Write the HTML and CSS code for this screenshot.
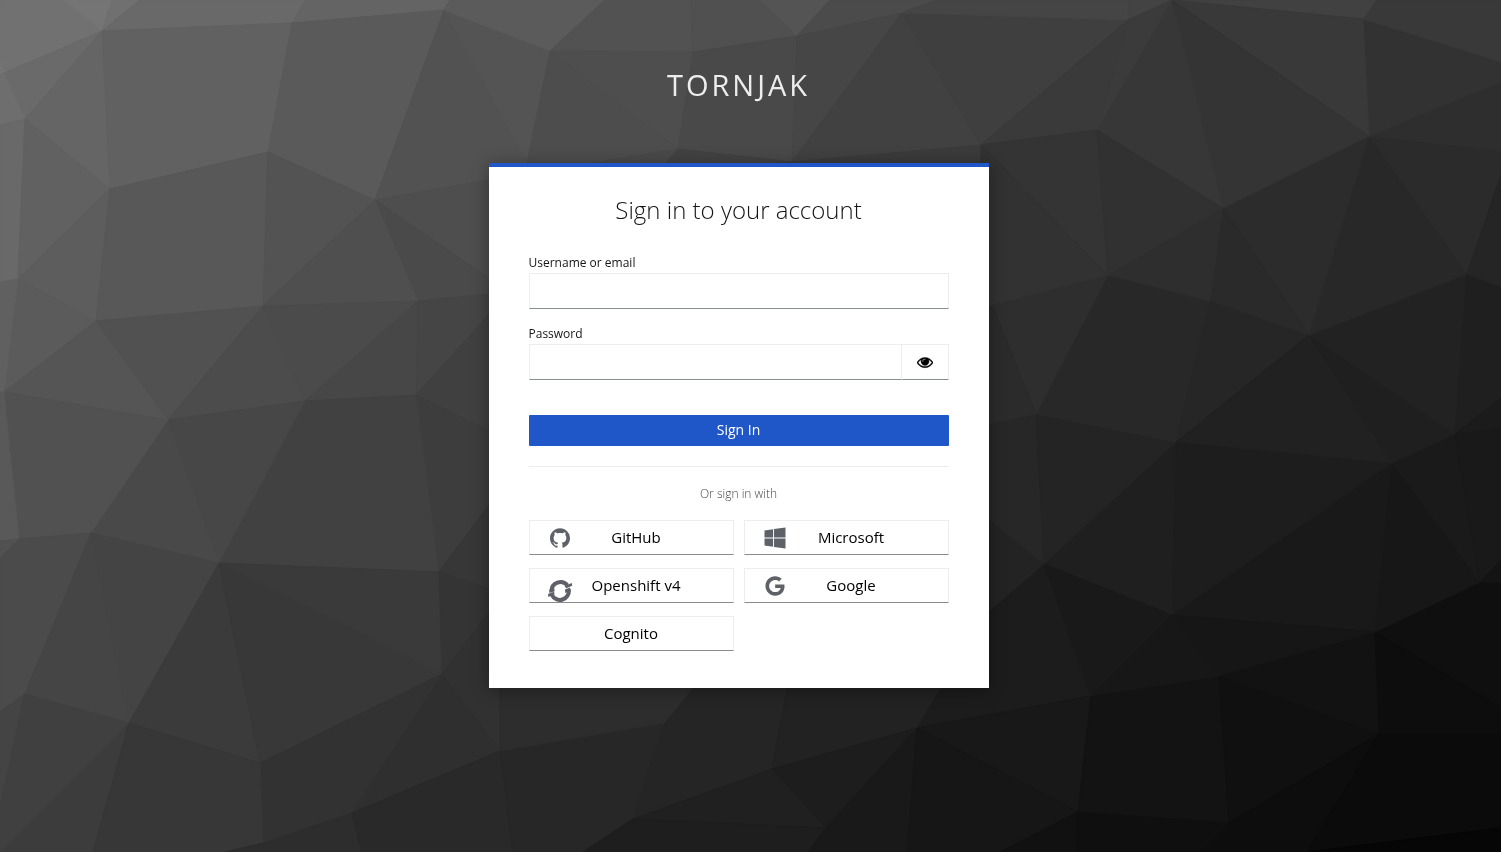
FILE: index.html
```
<!DOCTYPE html>
<html lang="en">
<head>
<meta charset="utf-8">
<title>Sign in to Tornjak</title>
<link rel="stylesheet" href="styles.css">
</head>
<body>
<svg class="backdrop" viewBox="0 0 1501 852" preserveAspectRatio="xMidYMid slice" aria-hidden="true">
<g fill="currentColor" stroke="currentColor" stroke-linejoin="round">
<polygon color="#717171" points="0,0 64,0 102,31 4,73 0,60"/>
<polygon color="#757575" points="64,0 112,0 102,31"/>
<polygon color="#707070" points="112,0 140,0 102,31"/>
<polygon color="#696969" points="102,31 140,0 306,0 292,23"/>
<polygon color="#757575" points="0,60 4,73 0,75"/>
<polygon color="#6a6a6a" points="102,31 4,73 25,119"/>
<polygon color="#6e6e6e" points="0,74 4,73 25,119 0,125"/>
<polygon color="#656565" points="102,31 25,119 110,189"/>
<polygon color="#616161" points="102,31 292,23 268,152 110,189"/>
<polygon color="#646464" points="292,23 306,0 450,0 444,10"/>
<polygon color="#5a5a5a" points="444,10 292,23 268,152 375,200"/>
<polygon color="#696969" points="0,125 25,119 18,279 0,282"/>
<polygon color="#616161" points="25,119 110,189 18,279"/>
<polygon color="#5d5d5d" points="110,189 18,279 96,321"/>
<polygon color="#585858" points="110,189 268,152 263,306 96,321"/>
<polygon color="#535353" points="268,152 375,200 263,306"/>
<polygon color="#525252" points="444,10 527,163 489,180 375,200"/>
<polygon color="#545454" points="444,10 550,51 527,163"/>
<polygon color="#5b5b5b" points="444,10 450,0 605,0 550,51"/>
<polygon color="#525252" points="550,51 605,0 691,0 693,52"/>
<polygon color="#505050" points="693,52 691,0 760,0 797,36"/>
<polygon color="#545454" points="760,0 830,0 797,36"/>
<polygon color="#4b4b4b" points="797,36 830,0 935,0 902,13"/>
<polygon color="#4e4e4e" points="550,51 693,52 678,149"/>
<polygon color="#4d4d4d" points="550,51 678,149 489,180 527,163"/>
<polygon color="#494949" points="693,52 797,36 792,162 678,149"/>
<polygon color="#464646" points="797,36 902,13 792,162"/>
<polygon color="#414141" points="902,13 981,145 792,162"/>
<polygon color="#3f3f3f" points="902,13 1128,20 981,145"/>
<polygon color="#454545" points="902,13 935,0 1128,0 1128,20"/>
<polygon color="#434343" points="1128,0 1172,0 1128,20"/>
<polygon color="#4a4a4a" points="489,180 678,149 660,180"/>
<polygon color="#424242" points="678,149 792,162 660,170"/>
<polygon color="#3b3b3b" points="792,162 981,145 981,180 660,180"/>
<polygon color="#4e4e4e" points="375,200 500,178 500,286"/>
<polygon color="#4a4a4a" points="375,200 500,286 500,293 418,301"/>
<polygon color="#4f4f4f" points="375,200 418,301 263,306"/>
<polygon color="#5b5b5b" points="18,279 96,321 4,392"/>
<polygon color="#606060" points="0,282 18,279 4,392 0,392"/>
<polygon color="#555555" points="96,321 4,392 168,420"/>
<polygon color="#515151" points="96,321 263,306 168,420"/>
<polygon color="#4c4c4c" points="263,306 168,420 305,401"/>
<polygon color="#4b4b4b" points="263,306 418,301 305,401"/>
<polygon color="#474747" points="418,301 416,395 305,401"/>
<polygon color="#454545" points="418,301 500,293 500,302 416,395"/>
<polygon color="#404040" points="416,395 500,302 500,436"/>
<polygon color="#3d3d3d" points="416,395 500,436 500,490 439,572"/>
<polygon color="#414141" points="305,401 416,395 439,572 219,563"/>
<polygon color="#474747" points="168,420 305,401 219,563"/>
<polygon color="#494949" points="168,420 91,533 219,563"/>
<polygon color="#515151" points="4,392 168,420 91,533 19,539"/>
<polygon color="#595959" points="0,392 4,392 19,539 0,541"/>
<polygon color="#515151" points="0,541 19,539 0,558"/>
<polygon color="#4b4b4b" points="0,558 19,539 91,533 25,694 0,712"/>
<polygon color="#454545" points="91,533 129,723 25,694"/>
<polygon color="#444444" points="91,533 219,563 129,723"/>
<polygon color="#3b3b3b" points="219,563 260,763 129,723"/>
<polygon color="#383838" points="219,563 442,674 260,763"/>
<polygon color="#3a3a3a" points="219,563 439,572 442,674"/>
<polygon color="#373737" points="439,572 500,490 500,592"/>
<polygon color="#343434" points="439,572 500,592 500,597 442,674"/>
<polygon color="#313131" points="442,674 500,597 500,751"/>
<polygon color="#2f2f2f" points="442,674 500,751 352,813"/>
<polygon color="#323232" points="260,763 442,674 352,813 263,843"/>
<polygon color="#444444" points="0,712 25,694 0,807"/>
<polygon color="#404040" points="25,694 129,723 0,852 0,807"/>
<polygon color="#3c3c3c" points="129,723 93,852 0,852"/>
<polygon color="#373737" points="129,723 260,763 263,843 225,852 93,852"/>
<polygon color="#2d2d2d" points="263,843 352,813 362,852 225,852"/>
<polygon color="#292929" points="352,813 500,751 513,852 362,852"/>
<polygon color="#272727" points="500,751 665,723 633,819 583,852 513,852"/>
<polygon color="#2d2d2d" points="500,680 700,680 665,723 500,751"/>
<polygon color="#252525" points="665,723 700,680 789,680 772,769 633,819"/>
<polygon color="#222222" points="789,680 946,680 917,728 772,769"/>
<polygon color="#202020" points="633,819 772,769 826,828"/>
<polygon color="#1e1e1e" points="633,819 826,828 808,852 583,852"/>
<polygon color="#1d1d1d" points="772,769 917,728 826,828"/>
<polygon color="#191919" points="826,828 917,728 907,852 808,852"/>
<polygon color="#1c1c1c" points="917,728 946,680 980,619 1044,564 1091,696"/>
<polygon color="#181818" points="917,728 1091,696 1078,812"/>
<polygon color="#161616" points="917,728 1078,812 1000,852 907,852"/>
<polygon color="#131313" points="1091,696 1219,676 1229,823 1078,812"/>
<polygon color="#111111" points="1078,812 1077,852 1000,852"/>
<polygon color="#0f0f0f" points="1078,812 1229,823 1200,852 1077,852"/>
<polygon color="#101010" points="1219,676 1379,734 1229,823"/>
<polygon color="#121212" points="1219,676 1375,632 1379,734"/>
<polygon color="#0d0d0d" points="1229,823 1379,734 1307,852 1200,852"/>
<polygon color="#0b0b0b" points="1379,734 1501,734 1501,828 1307,852"/>
<polygon color="#060606" points="1501,828 1501,852 1307,852"/>
<polygon color="#0f0f0f" points="1375,632 1480,582 1501,582 1501,708"/>
<polygon color="#0d0d0d" points="1375,632 1501,708 1501,734 1379,734"/>
<polygon color="#171717" points="1392,463 1480,582 1375,632"/>
<polygon color="#1a1a1a" points="1392,463 1455,434 1480,582"/>
<polygon color="#191919" points="1455,434 1501,428 1501,560 1480,582"/>
<polygon color="#141414" points="1480,582 1501,560 1501,582"/>
<polygon color="#191919" points="1392,463 1375,632 1172,615"/>
<polygon color="#1d1d1d" points="1176,442 1392,463 1172,615"/>
<polygon color="#1f1f1f" points="1176,442 1172,615 1044,564"/>
<polygon color="#191919" points="1044,564 1172,615 1091,696"/>
<polygon color="#161616" points="1172,615 1375,632 1219,676"/>
<polygon color="#171717" points="1172,615 1219,676 1091,696"/>
<polygon color="#232323" points="980,512 1044,564 980,619"/>
<polygon color="#272727" points="980,426 1036,414 1044,564 980,512"/>
<polygon color="#242424" points="1036,414 1176,442 1044,564"/>
<polygon color="#282828" points="1108,275 1210,301 1176,442 1036,414"/>
<polygon color="#262626" points="1210,301 1309,335 1176,442"/>
<polygon color="#2e2e2e" points="1108,275 1036,414 992,305"/>
<polygon color="#2b2b2b" points="992,305 1036,414 980,426 980,310"/>
<polygon color="#212121" points="1176,442 1309,335 1392,463"/>
<polygon color="#1f1f1f" points="1309,335 1455,434 1392,463"/>
<polygon color="#222222" points="1309,335 1467,274 1455,434"/>
<polygon color="#1f1f1f" points="1467,274 1501,287 1501,398 1455,434"/>
<polygon color="#1b1b1b" points="1455,434 1501,398 1501,428"/>
<polygon color="#282828" points="1369,136 1467,274 1309,335"/>
<polygon color="#2c2c2c" points="1369,136 1309,335 1223,208"/>
<polygon color="#2a2a2a" points="1223,208 1309,335 1210,301"/>
<polygon color="#2e2e2e" points="1223,208 1210,301 1108,275"/>
<polygon color="#2b2b2b" points="1369,136 1501,151 1501,175 1467,274"/>
<polygon color="#252525" points="1467,274 1501,175 1501,287"/>
<polygon color="#2e2e2e" points="1369,136 1501,82 1501,151"/>
<polygon color="#323232" points="1363,19 1501,62 1501,82 1369,136"/>
<polygon color="#393939" points="1363,19 1376,0 1501,0 1501,62"/>
<polygon color="#414141" points="1172,0 1376,0 1363,19"/>
<polygon color="#393939" points="1172,0 1363,19 1369,136"/>
<polygon color="#343434" points="1172,0 1369,136 1223,208"/>
<polygon color="#373737" points="1172,0 1223,208 1097,130"/>
<polygon color="#3b3b3b" points="1172,0 1097,130 1128,20"/>
<polygon color="#3a3a3a" points="1128,20 1097,130 981,145"/>
<polygon color="#343434" points="981,145 1097,130 1108,275"/>
<polygon color="#313131" points="1097,130 1223,208 1108,275"/>
<polygon color="#323232" points="981,145 1108,275 992,305 980,310"/>
</g>
</svg>

<div class="page">
<header class="brand">Tornjak</header>
<main class="card">
<h1 class="card-title">Sign in to your account</h1>
<form class="form" action="#" method="post">
<div class="field">
<label class="label" for="username">Username or email</label>
<input class="input" id="username" name="username" type="text" autocomplete="username">
</div>
<div class="field">
<label class="label" for="password">Password</label>
<div class="input-group">
<input class="input" id="password" name="password" type="password" autocomplete="current-password">
<button class="reveal" type="button" aria-label="Show password">
<svg width="16" height="16" viewBox="0 0 1792 1792" aria-hidden="true"><path fill="currentColor" stroke="currentColor" stroke-width="40" d="M1664 960q-152-236-381-353 61 104 61 225 0 185-131.500 316.500t-316.500 131.500-316.500-131.500-131.500-316.500q0-121 61-225-229 117-381 353 133 205 333.500 326.500t434.500 121.500 434.500-121.500 333.500-326.500zm-720-384q0-20-14-34t-34-14q-125 0-214.500 89.500t-89.500 214.500q0 20 14 34t34 14 34-14 14-34q0-86 61-147t147-61q20 0 34-14t14-34zm848 384q0 34-20 69-140 230-376.500 368.500t-499.500 138.500-499.500-139-376.500-368q-20-35-20-69t20-69q140-229 376.500-368t499.500-139 499.500 139 376.500 368q20 35 20 69z"/></svg>
</button>
</div>
</div>
<button class="submit" type="submit">Sign In</button>
</form>
<section class="providers">
<h2 class="providers-title">Or sign in with</h2>
<div class="provider-grid">
<a class="provider" href="#github">
<svg class="provider-icon" width="20" height="20" viewBox="0 0 24 24" aria-hidden="true"><path fill="currentColor" d="M12 .297c-6.630 0-12 5.373-12 12 0 5.303 3.438 9.800 8.205 11.385.6.113.82-.258.82-.577 0-.285-.01-1.040-.015-2.040-3.338.724-4.042-1.610-4.042-1.610C4.422 18.070 3.633 17.700 3.633 17.700c-1.087-.744.084-.729.084-.729 1.205.084 1.838 1.236 1.838 1.236 1.070 1.835 2.809 1.305 3.495.998.108-.776.417-1.305.76-1.605-2.665-.3-5.466-1.332-5.466-5.930 0-1.310.465-2.380 1.235-3.220-.135-.303-.54-1.523.105-3.176 0 0 1.005-.322 3.300 1.230.96-.267 1.980-.399 3-.405 1.020.006 2.040.138 3 .405 2.280-1.552 3.285-1.230 3.285-1.230.645 1.653.24 2.873.12 3.176.765.84 1.230 1.910 1.230 3.220 0 4.610-2.805 5.625-5.475 5.920.42.36.81 1.096.81 2.220 0 1.606-.015 2.896-.015 3.286 0 .315.21.69.825.57C20.565 22.092 24 17.592 24 12.297c0-6.627-5.373-12-12-12"/></svg>
<span class="provider-name">GitHub</span></a>
<a class="provider" href="#microsoft">
<svg class="provider-icon" width="22" height="24" viewBox="0 0 448 512" aria-hidden="true"><path fill="currentColor" d="M0 93.700l183.600-25.300v177.400H0V93.700zm0 324.600l183.600 25.300V268.400H0v149.900zm203.800 28L448 480V268.400H203.800v177.900zm0-380.600v180.100H448V32L203.800 65.700z"/></svg>
<span class="provider-name">Microsoft</span></a>
<a class="provider" href="#openshift">
<svg class="provider-icon provider-icon-low" width="26" height="26" viewBox="0 0 26 26" aria-hidden="true"><g fill="none" stroke="currentColor" stroke-width="4"><path d="M4.500 13A9 9 0 0 1 20.400 7.300"/><path d="M21.800 11.500A9 9 0 0 1 4.800 16.800"/></g><path fill="currentColor" d="M17.500 8l7.300-3 .4 2.800-6 2.400zM1 16l6-2.300.6 2.600-6.200 2.700zM2.300 11.500l4.800-1.800.6 3.500-5.400 1.800zM18 11.500l5-1.900.8 3.400-5.600 2z"/></svg>
<span class="provider-name">Openshift v4</span></a>
<a class="provider" href="#google">
<svg class="provider-icon" width="20" height="20" viewBox="0 0 488 512" aria-hidden="true"><path fill="currentColor" d="M488 261.800C488 403.300 391.100 504 248 504 110.800 504 0 393.200 0 256S110.800 8 248 8c66.800 0 123 24.500 166.300 64.900l-67.500 64.900C258.500 52.600 94.300 116.600 94.300 256c0 86.500 69.100 156.600 153.700 156.600 98.200 0 135-70.400 140.800-106.900H248v-85.300h236.100c2.300 12.700 3.900 24.900 3.900 41.400z"/></svg>
<span class="provider-name">Google</span></a>
<a class="provider" href="#cognito"><span class="provider-name provider-name-wide">Cognito</span></a>
</div>
</section>
</main>
</div>
</body>
</html>
```
FILE: styles.css
```
* {
  box-sizing: border-box;
}

body {
  margin: 0;
  background: #333;
  color: #151515;
  font-family: "Open Sans", "Noto Sans", sans-serif;
  font-size: 14px;
}

/* Faceted backdrop that always covers the window */
.backdrop {
  position: fixed;
  inset: 0;
  width: 100%;
  height: 100%;
  z-index: -1;
}

.page {
  display: flex;
  flex-direction: column;
  align-items: center;
  min-height: 100vh;
  padding: 66px 24px 40px 0;
}

.brand {
  margin-bottom: 59px;
  color: #ededed;
  font-size: 29px;
  font-weight: 500;
  line-height: 38px;
  letter-spacing: 3px;
  text-transform: uppercase;
}

.card {
  width: 100%;
  max-width: 500px;
  padding: 27px 40px 37px;
  border-top: 4px solid #1f57c8;
  background: #fff;
  box-shadow: 0 2px 16px rgba(0, 0, 0, 0.35);
}

.card-title {
  margin: 0 0 27px;
  font-size: 24px;
  font-weight: 300;
  line-height: 32px;
  text-align: center;
}

.form {
  padding-bottom: 20px;
  border-bottom: 1px solid #ededed;
}

.field {
  margin-bottom: 15px;
}

.label {
  display: block;
  font-size: 12px;
  line-height: 20px;
}

.input {
  display: block;
  width: 100%;
  height: 36px;
  padding: 5px 8px;
  border: 1px solid #ededed;
  border-bottom-color: #8a8d90;
  border-radius: 0;
  background: #fff;
  font: inherit;
}

.input-group {
  display: flex;
}

.input-group .input {
  flex: 1;
  border-right: 0;
}

.reveal {
  display: flex;
  align-items: center;
  justify-content: center;
  width: 48px;
  padding: 0;
  border: 1px solid #ededed;
  border-bottom-color: #8a8d90;
  background: #fff;
  color: #000;
}

.submit {
  display: block;
  width: 100%;
  height: 31px;
  margin-top: 35px;
  padding: 0 0 2px;
  border: 0;
  border-radius: 1px;
  background: #1f57c8;
  color: #fff;
  font: inherit;
  font-weight: 500;
}

.providers-title {
  margin: 18px 0;
  color: #444;
  font-size: 12px;
  font-weight: 300;
  line-height: 17px;
  text-align: center;
}

.provider-grid {
  display: grid;
  grid-template-columns: 1fr 1fr;
  gap: 13px 10px;
}

.provider {
  display: grid;
  grid-template-columns: 60px 1fr 50px;
  align-items: center;
  height: 35px;
  overflow: hidden;
  border: 1px solid #ededed;
  border-bottom-color: #8a8d90;
  color: #000;
  font-size: 15px;
  text-decoration: none;
}

.provider-icon {
  grid-column: 1;
  justify-self: center;
  color: #5e6268;
}

.provider-icon-low {
  align-self: end;
  margin-bottom: -2px;
}

.provider-name {
  grid-column: 2;
  padding-bottom: 2px;
  text-align: center;
  white-space: nowrap;
}

.provider-name-wide {
  grid-column: 1 / -1;
}
```
